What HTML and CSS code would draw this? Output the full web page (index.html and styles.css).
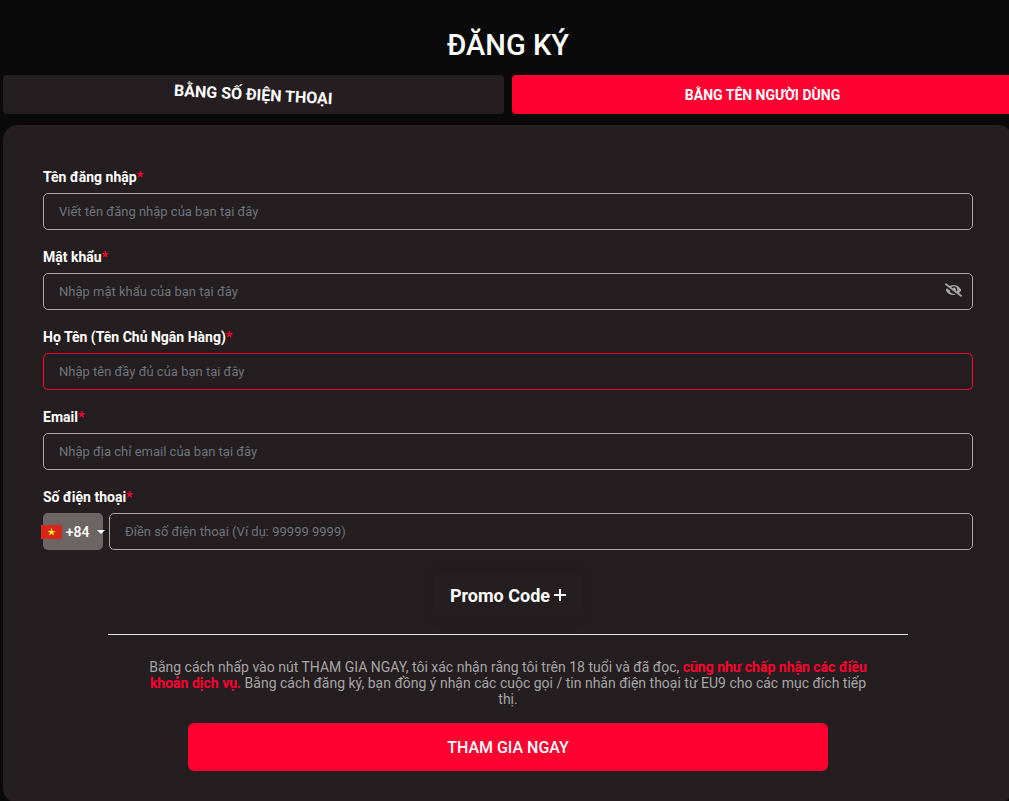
FILE: index.html
```html
<!DOCTYPE html>
<html lang="vi">
<head>
    <meta charset="UTF-8">
    <meta name="viewport" content="width=device-width, initial-scale=1.0">
    <title>Đăng ký</title>
    <link rel="stylesheet" href="styles.css">
</head>
<body>

    <main class="register">
        <h1 class="title">ĐĂNG KÝ</h1>

        <div class="tabs">
            <button type="button" class="tab"><span class="tab-shake">BẰNG SỐ ĐIỆN THOẠI</span></button>
            <button type="button" class="tab active">BẰNG TÊN NGƯỜI DÙNG</button>
        </div>

        <form class="panel">
            <div class="field">
                <label for="username">Tên đăng nhập<span class="required">*</span></label>
                <input type="text" id="username" placeholder="Viết tên đăng nhập của bạn tại đây">
            </div>

            <div class="field">
                <label for="password">Mật khẩu<span class="required">*</span></label>
                <div class="password">
                    <input type="password" id="password" placeholder="Nhập mật khẩu của bạn tại đây">
                    <button type="button" class="toggle" aria-label="Hiện mật khẩu">
                        <svg viewBox="0 0 640 512" width="17" height="14" fill="currentColor">
                            <path d="M320 400c-75.850 0-137.250-58.710-142.900-133.110L72.200 185.820c-13.790 17.300-26.480 35.590-36.720 55.590a32.350 32.350 0 0 0 0 29.190C89.710 376.410 197.070 448 320 448c26.910 0 52.870-4 77.890-10.460L346 397.390a144.130 144.130 0 0 1-26 2.610zm313.820 58.100l-110.550-85.440a331.250 331.250 0 0 0 81.250-102.070 32.350 32.350 0 0 0 0-29.190C550.290 135.590 442.930 64 320 64a308.150 308.150 0 0 0-147.320 37.700L45.460 3.370A16 16 0 0 0 23 6.180L3.370 31.450A16 16 0 0 0 6.180 53.900l588.360 454.730a16 16 0 0 0 22.460-2.810l19.640-25.270a16 16 0 0 0-2.820-22.450zm-183.720-142l-39.300-30.380A94.750 94.750 0 0 0 416 256a94.760 94.760 0 0 0-121.310-92.210A47.650 47.650 0 0 1 304 192a46.640 46.640 0 0 1-1.540 10l-73.610-56.890A142.310 142.310 0 0 1 320 112a143.920 143.920 0 0 1 144 144c0 21.630-5.290 41.790-13.900 60.110z"/>
                        </svg>
                    </button>
                </div>
            </div>

            <div class="field">
                <label for="fullname">Họ Tên (Tên Chủ Ngân Hàng)<span class="required">*</span></label>
                <input type="text" id="fullname" class="invalid" placeholder="Nhập tên đầy đủ của bạn tại đây">
            </div>

            <div class="field">
                <label for="email">Email<span class="required">*</span></label>
                <input type="email" id="email" placeholder="Nhập địa chỉ email của bạn tại đây">
            </div>

            <div class="field">
                <label for="phone">Số điện thoại<span class="required">*</span></label>
                <div class="phone">
                    <button type="button" class="country">
                        <svg viewBox="0 0 21 14" width="21" height="14">
                            <rect width="21" height="14" fill="#da251d"/>
                            <path d="M10.500 3l.94 2.900h3.050l-2.470 1.800.95 2.900-2.470-1.800-2.470 1.800.95-2.900-2.470-1.800h3.050z" fill="#ff0"/>
                        </svg>
                        <span>+84</span>
                        <span class="caret"></span>
                    </button>
                    <input type="tel" id="phone" placeholder="Điền số điện thoại (Ví dụ: 99999 9999)">
                </div>
            </div>

            <button type="button" class="promo">
                Promo Code
                <svg viewBox="0 0 12 12" width="12" height="12" fill="currentColor">
                    <path d="M5 0h2v5h5v2H7v5H5V7H0V5h5z"/>
                </svg>
            </button>

            <hr class="divider">

            <p class="terms">
                Bằng cách nhấp vào nút THAM GIA NGAY, tôi xác nhận rằng tôi trên 18 tuổi và đã đọc,
                <a href="#">cũng như chấp nhận các điều khoản dịch vụ.</a>
                Bằng cách đăng ký, bạn đồng ý nhận các cuộc gọi / tin nhắn điện thoại từ EU9 cho các mục đích tiếp thị.
            </p>

            <button type="submit" class="submit">THAM GIA NGAY</button>
        </form>
    </main>

</body>
</html>
```
FILE: styles.css
```css
* {
    box-sizing: border-box;
}
body {
    margin: 0;
    background-color: #0a0a0a;
    color: #fff;
    font-family: Roboto, "Noto Sans", sans-serif;
    font-size: 14px;
    overflow: hidden;
}
button, input {
    font-family: inherit;
    color: inherit;
}
button {
    border: 0;
    padding: 0;
    background: none;
    cursor: pointer;
}
/* the sheet runs slightly past the right edge of the window */
.register {
    margin: 0 -4px 0 3px;
    padding-top: 27px;
}
.title {
    margin: 0 0 12px;
    font-size: 29px;
    line-height: 36px;
    font-weight: 500;
    text-align: center;
}
.tabs {
    display: grid;
    grid-template-columns: 1fr 1fr;
    gap: 8px;
    margin-bottom: 11px;
}
.tab {
    height: 39px;
    border-radius: 4px;
    background-color: #241e20;
    font-size: 14px;
    font-weight: 700;
}
.tab.active {
    background-color: #ff0030;
}
.tab-shake {
    display: inline-block;
    font-size: 16px;
    transform: rotate(3deg);
}
.panel {
    display: flex;
    flex-direction: column;
    padding: 40px 40px 32px;
    border-radius: 15px;
    background-color: #241e20;
}
.field {
    margin-bottom: 15px;
}
label {
    display: block;
    margin-bottom: 4px;
    line-height: 24px;
    font-weight: 700;
}
.required {
    color: #ff0030;
}
input {
    display: block;
    width: 100%;
    height: 37px;
    padding: 0 15px;
    border: 1px solid #a7a5a6;
    border-radius: 5px;
    background: transparent;
    font-size: 13px;
    outline: none;
}
input::placeholder {
    color: #6c757d;
    opacity: 1;
}
input.invalid {
    border-color: #ff0030;
}
.password {
    position: relative;
}
.toggle {
    position: absolute;
    top: 0;
    right: 11px;
    height: 34px;
    display: flex;
    align-items: center;
    color: #a7a5a6;
}
.phone {
    display: flex;
    gap: 6px;
}
.country {
    display: flex;
    flex: 0 0 60px;
    min-width: 0;
    align-items: center;
    justify-content: center;
    gap: 4px;
    border-radius: 5px;
    background-color: #6b6664;
    font-size: 14px;
    font-weight: 500;
}
.country svg, .caret {
    flex: none;
}
.caret {
    margin-left: 4px;
    border: 4px solid transparent;
    border-top-color: #fff;
    border-bottom: 0;
}
.promo {
    display: flex;
    align-items: center;
    gap: 4px;
    align-self: center;
    height: 44px;
    margin: 8px 0 17px;
    padding: 0 16px;
    border-radius: 4px;
    font-size: 18px;
    font-weight: 700;
    box-shadow: 0 0 16px rgba(0, 0, 0, 0.1);
}
.divider {
    width: 100%;
    max-width: 800px;
    margin: 0 auto 24px;
    border: 0;
    border-top: 1px solid #dee2e6;
}
.terms {
    max-width: 724px;
    margin: 0 auto 16px;
    color: #a7a5a6;
    line-height: 16px;
    text-align: center;
}
.terms a {
    color: #ff0030;
    font-weight: 700;
    text-decoration: none;
}
.submit {
    align-self: center;
    width: 100%;
    max-width: 640px;
    height: 48px;
    border-radius: 6px;
    background-color: #ff0030;
    font-size: 16px;
    font-weight: 500;
}
```
